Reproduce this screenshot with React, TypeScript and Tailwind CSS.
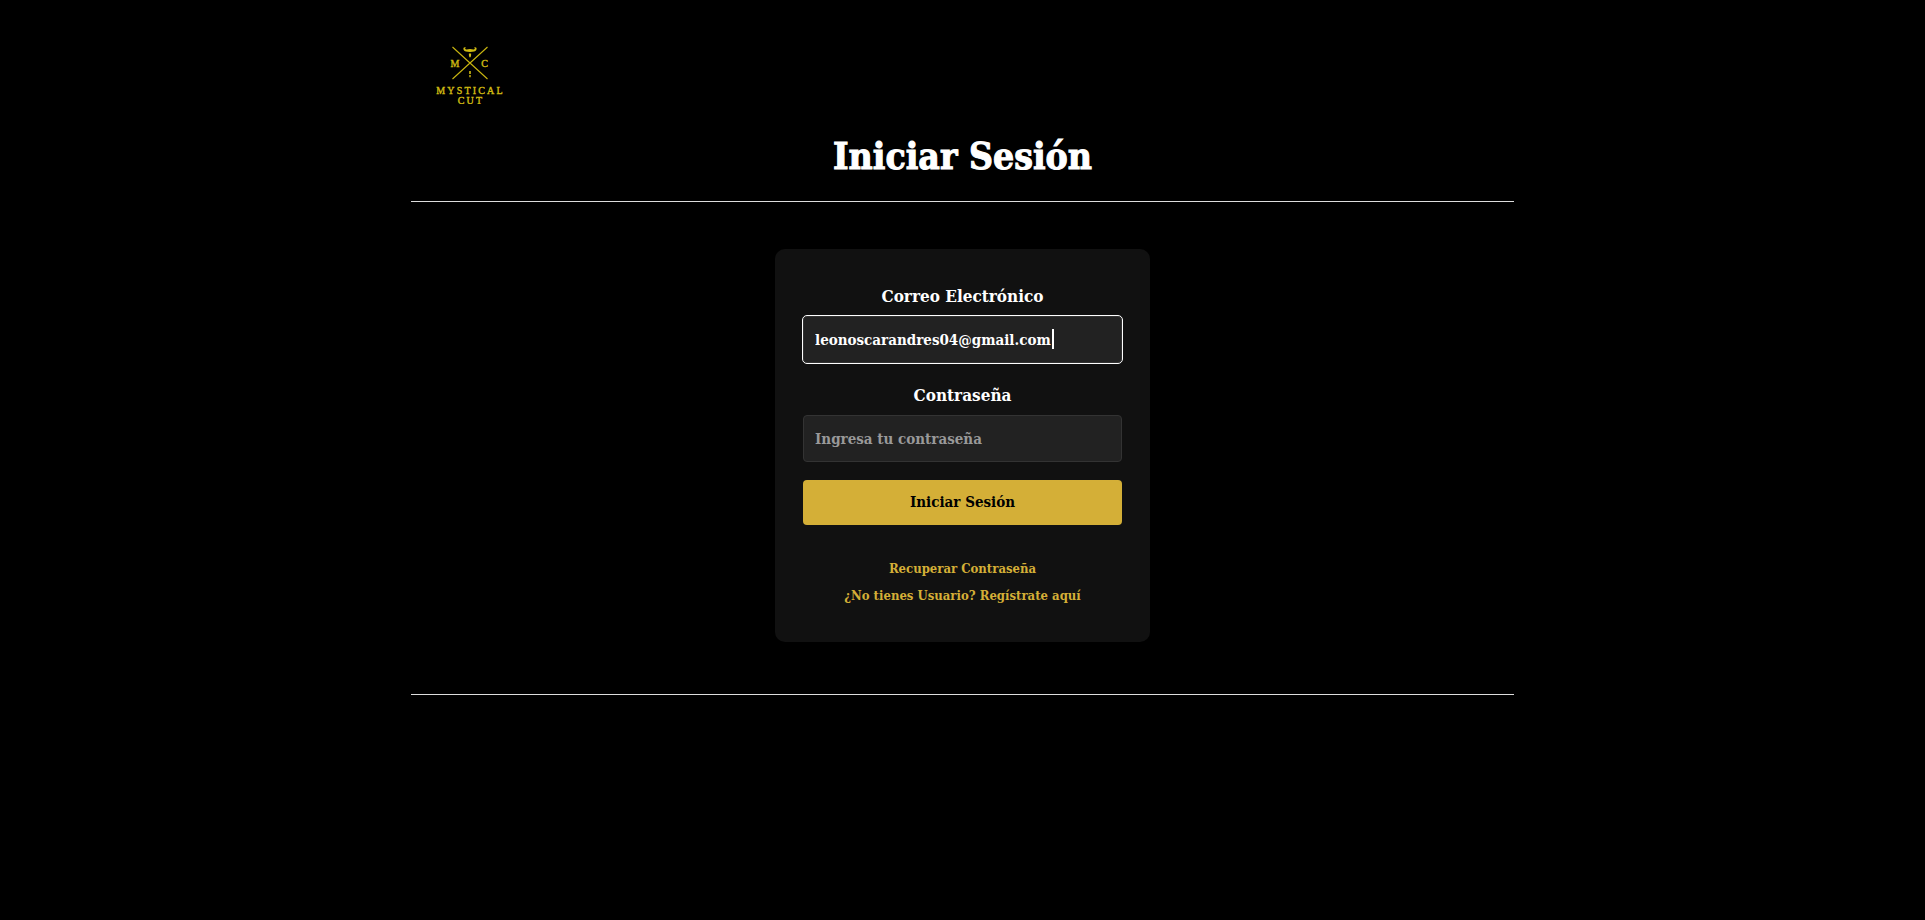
import { useState } from "react";

function Logo() {
  return (
    <svg viewBox="0 0 72 60" className="h-[60px] w-[72px]" fill="#d0bb12" role="img" aria-label="Mystical Cut">
      <path d="M18.5 3 53.5 35M53.5 3 18.5 35" stroke="#c9b510" strokeWidth="1.1" />
      <path d="M32 3.500c-2.600-.6-3 1-2.300 2.600.8 1.700 3 1.800 6.300 1.800s5.500-.1 6.300-1.800c.7-1.600.3-3.200-2.300-2.600.9.300 1.200 1.200.3 1.700-1.300.7-2.600-.3-4.300-.3s-3 1-4.300.3c-.9-.5-.6-1.400.3-1.700Z" />
      <path d="M34.900 9.500h2.200v1.800l-.5 2h-1.200l-.5-2ZM35.200 27h1.600v3h-1.600ZM35.300 31h1.400v2.200h-1.400Z" />
      <g fontFamily="'Liberation Serif', serif" fontWeight="400" textAnchor="middle" stroke="#d0bb12" strokeWidth="0.4">
        <text x="21" y="22.500" fontSize="10">M</text>
        <text x="50.500" y="22.500" fontSize="10">C</text>
        <text x="36.500" y="49.500" fontSize="10" letterSpacing="2.200">MYSTICAL</text>
        <text x="37" y="59.500" fontSize="10" letterSpacing="2.200">CUT</text>
      </g>
    </svg>
  );
}

const field =
  "h-[47px] w-full rounded border border-[#333] bg-[#222] px-[11px] text-[15px] font-bold text-white placeholder:text-[#999]";

export default function App() {
  const [email, setEmail] = useState("leonoscarandres04@gmail.com");
  const [password, setPassword] = useState("");

  return (
    <div className="min-h-screen bg-black px-12 font-['DejaVu_Serif_Condensed','DejaVu_Serif',serif] font-bold text-white">
      <div className="mx-auto max-w-[1103px]">
        <header className="border-b border-[#ddd] pt-11 pb-[22px]">
          <a href="#" className="ml-[23px] block w-fit">
            <Logo />
          </a>
          <h1 className="mt-[30px] text-center text-[37px] leading-[45px] [-webkit-text-stroke:1px_white]">
            Iniciar Sesión
          </h1>
        </header>

        <main className="border-b border-[#ddd] pt-[47px] pb-[52px]">
          <section className="mx-auto w-full max-w-[375px] rounded-[10px] bg-[#111] px-7 pt-[35px] pb-[33px] text-center">
            <form onSubmit={(event) => event.preventDefault()}>
              <label htmlFor="email" className="mb-2 block text-[17px] leading-6">
                Correo Electrónico
              </label>
              <div className="relative">
                <input
                  id="email"
                  type="email"
                  value={email}
                  onChange={(event) => setEmail(event.target.value)}
                  className={`${field} outline-1 outline-white`}
                />
                <span className="absolute top-[13px] left-[249px] h-5 w-[2px] bg-white" />
              </div>
              <label htmlFor="password" className="mt-5 mb-2 block text-[17px] leading-6">
                Contraseña
              </label>
              <input
                id="password"
                type="password"
                placeholder="Ingresa tu contraseña"
                value={password}
                onChange={(event) => setPassword(event.target.value)}
                className={field}
              />
              <button type="submit" className="mt-[18px] h-[45px] w-full rounded bg-[#d4af37] text-[15px] text-black">
                Iniciar Sesión
              </button>
            </form>
            <nav className="mt-[30px] flex flex-col items-center text-[13px] leading-[27px] text-[#d4af37]">
              <a href="#">Recuperar Contraseña</a>
              <a href="#">¿No tienes Usuario? Regístrate aquí</a>
            </nav>
          </section>
        </main>
      </div>
    </div>
  );
}
